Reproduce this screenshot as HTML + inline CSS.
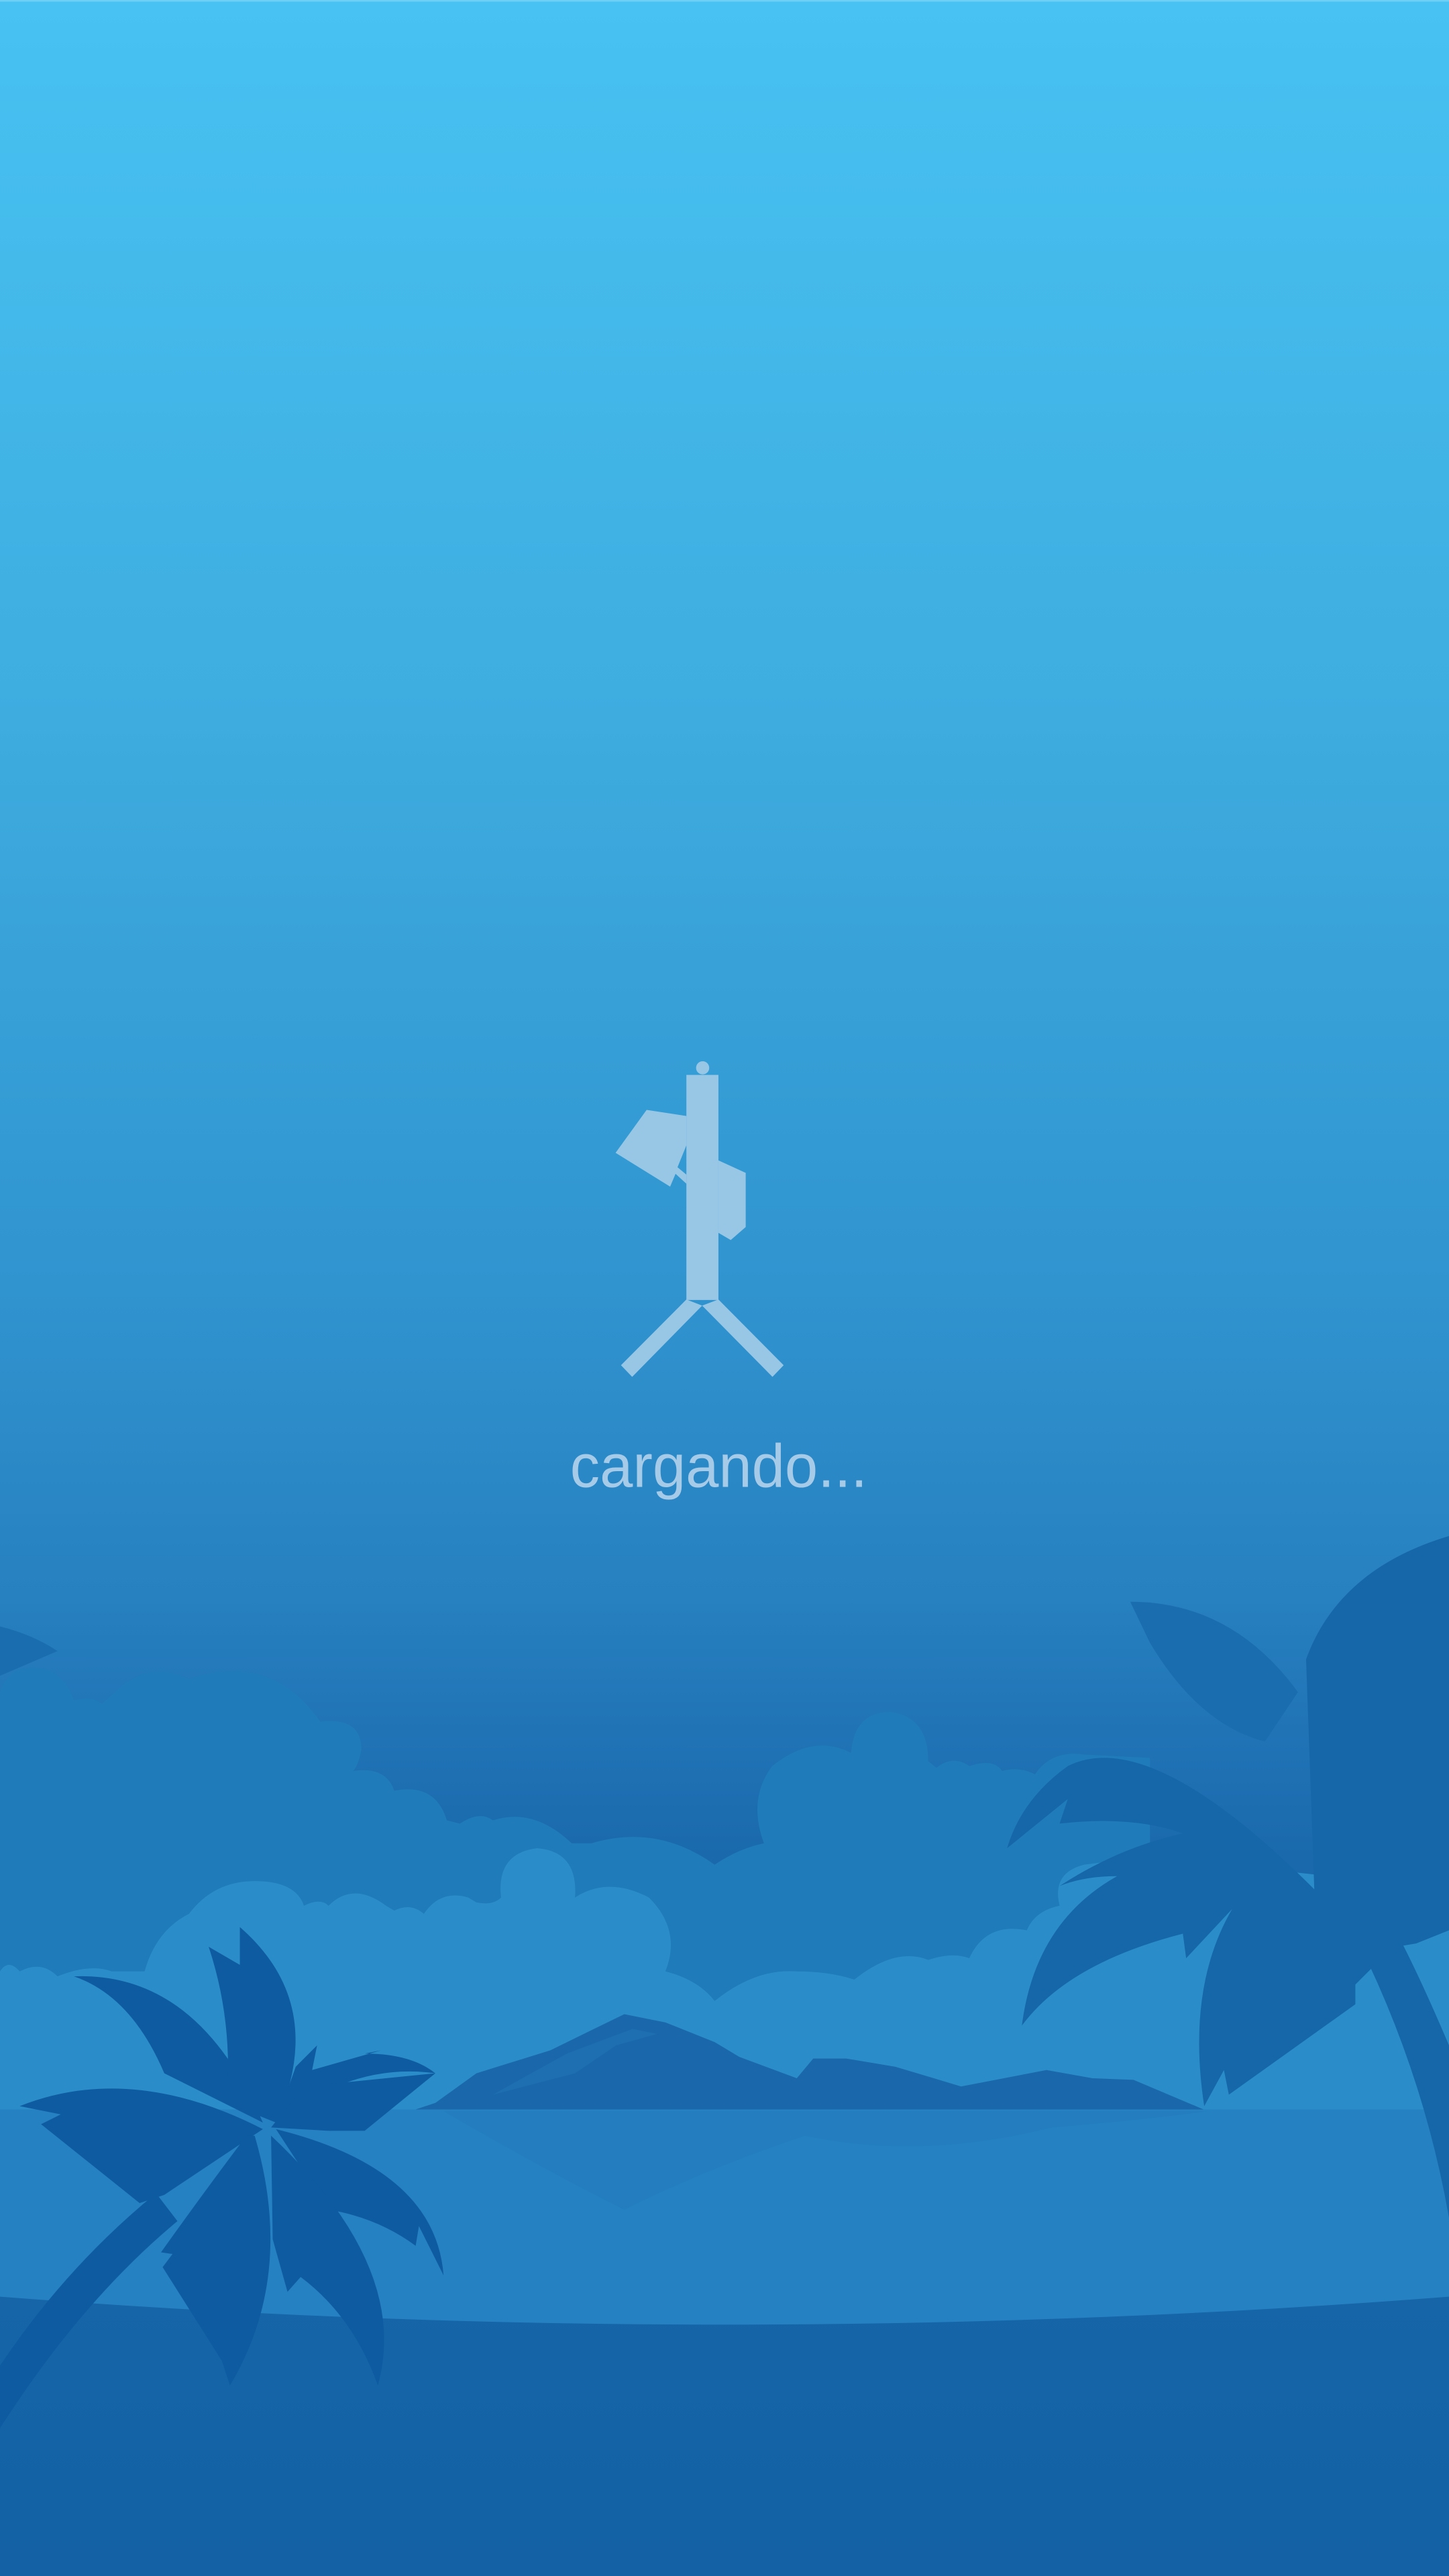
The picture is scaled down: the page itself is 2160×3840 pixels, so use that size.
<!DOCTYPE html>
<html><head><meta charset="utf-8"><style>
html,body{margin:0;padding:0;width:2160px;height:3840px;overflow:hidden;background:#1462a6}
svg{display:block}
</style></head><body>
<svg width="2160" height="3840" viewBox="0 0 882 1568" preserveAspectRatio="none" xmlns="http://www.w3.org/2000/svg">
<defs>
<linearGradient id="sky" x1="0" y1="0" x2="0" y2="1">
<stop offset="0" stop-color="#47c2f2"/>
<stop offset="0.28" stop-color="#3eacdf"/>
<stop offset="0.5" stop-color="#3094cf"/>
<stop offset="0.62" stop-color="#2780c0"/>
<stop offset="0.72" stop-color="#1a69ad"/>
<stop offset="1" stop-color="#1a69ad"/>
</linearGradient>
<linearGradient id="gr" x1="0" y1="0" x2="0" y2="1">
<stop offset="0" stop-color="#1565a8"/>
<stop offset="1" stop-color="#1461a5"/>
</linearGradient>
</defs>
<rect width="882" height="1568" fill="url(#sky)"/>
<rect width="882" height="1" fill="#6fd0f5"/>

<!-- faint background palm -->
<g fill="#1a6dae">
<path d="M688,975 Q750,975 790,1030 L770,1060 Q730,1050 700,1000 Z"/>
<path d="M0,990 Q20,995 35,1005 L0,1020 Z"/>
<path d="M0,1090 L25,1122 L0,1115 Z"/>
</g>

<!-- back clouds -->
<path fill="#1f7bb9" d="M0,1030 Q5,1015 20,1015 Q38,1015 45,1035 Q55,1032 62,1037 L70,1030 Q90,1010 115,1022 Q165,1005 195,1048 Q220,1045 220,1065 Q218,1075 215,1078 Q235,1075 240,1090 Q265,1085 272,1108 L280,1110 Q292,1102 300,1108 Q325,1100 348,1122 L360,1122 Q400,1110 435,1135 Q450,1125 465,1122 Q455,1095 470,1075 Q495,1055 518,1067 Q520,1042 542,1042 Q565,1045 565,1072 L570,1076 Q580,1068 590,1075 Q605,1070 610,1078 Q620,1075 630,1080 Q640,1065 660,1068 L700,1070 L700,1290 L0,1290 Z"/>

<!-- front clouds -->
<path fill="#2a8dc9" d="M0,1200 Q5,1192 12,1200 Q25,1193 35,1203 Q55,1195 68,1200 L88,1200 Q95,1175 115,1165 Q130,1145 155,1145 Q180,1145 185,1160 Q195,1155 200,1160 Q215,1145 235,1160 L240,1163 Q250,1158 258,1165 Q268,1150 285,1155 L290,1158 Q300,1160 305,1155 Q302,1128 327,1125 Q352,1127 350,1155 Q370,1142 395,1155 Q415,1175 405,1200 Q425,1205 435,1218 Q460,1198 485,1200 Q505,1200 520,1205 Q545,1185 565,1193 Q580,1188 590,1192 Q600,1170 625,1175 Q630,1163 645,1160 Q640,1140 660,1135 L700,1130 L882,1150 L882,1290 L0,1290 Z"/>

<!-- mountains -->
<path fill="#1a68ab" d="M250,1285 L265,1280 L290,1262 L335,1248 L380,1226 L405,1231 L435,1243 L450,1252 L485,1265 L495,1253 L515,1253 L545,1258 L585,1270 L637,1260 L665,1265 L690,1266 L735,1285 Z"/>
<path fill="#1f74b5" d="M300,1275 L345,1250 L385,1235 L400,1238 L375,1245 L350,1262 Z" opacity="0.6"/>

<!-- sea -->
<rect x="0" y="1284" width="882" height="140" fill="#2581c1"/>
<path fill="#2279bb" opacity="0.5" d="M270,1285 Q330,1320 380,1345 Q430,1320 490,1300 Q560,1315 640,1295 Q700,1290 735,1285 Z"/>

<!-- ground -->
<path fill="url(#gr)" d="M0,1398 Q441,1432 882,1398 L882,1568 L0,1568 Z"/>

<!-- right palm -->
<g fill="#1667aa">
<path d="M800,1150 Q700,1050 650,1075 Q622,1095 613,1125 L650,1095 L645,1110 Q690,1105 720,1116 Q680,1125 645,1148 Q660,1142 680,1142 Q630,1170 622,1233 Q650,1195 720,1177 L722,1192 L750,1162 Q722,1210 733,1282 L745,1260 L748,1275 L825,1220 L825,1208 L835,1198 L850,1185 L862,1183 L882,1175 L882,935 Q815,955 795,1010 Z"/>
<path d="M833,1195 Q868,1270 882,1350 L882,1245 Q865,1205 852,1180 Z"/>
</g>

<!-- left palm -->
<g fill="#0f5ba1">
<path d="M95,1335 Q40,1380 0,1440 L0,1478 Q50,1400 108,1352 Z"/>
<path d="M160,1292 Q120,1200 45,1203 Q80,1215 100,1262 Z"/>
<path d="M168,1292 Q200,1220 146,1173 L146,1196 L127,1185 Q142,1230 138,1280 Z"/>
<path d="M168,1292 Q215,1255 265,1262 Q250,1250 222,1250 L232,1248 L190,1260 L193,1245 L180,1258 Z"/>
<path d="M165,1295 L200,1297 L222,1297 L265,1262 L185,1270 Z"/>
<path d="M160,1296 Q80,1255 12,1282 L37,1287 L25,1293 L85,1341 L100,1336 Z"/>
<path d="M168,1296 Q265,1320 270,1385 L255,1355 L253,1367 Q230,1350 200,1345 Z"/>
<path d="M165,1300 Q250,1380 230,1452 Q215,1410 183,1386 L175,1395 L166,1363 Z"/>
<path d="M155,1300 Q180,1385 140,1452 L135,1437 L99,1380 L105,1372 L98,1371 Q120,1340 150,1300 Z"/>
</g>

<!-- icon -->
<g fill="#98c7e6">
<circle cx="427.7" cy="650" r="4"/>
<rect x="417.8" y="654.3" width="19.5" height="137"/>
<path d="M393.6,675.6 L417.8,679.3 L417.8,697.2 L412.4,710.5 L417.8,715 L417.8,720.5 L411.2,714.5 L407.9,722.3 L374.7,701.7 Z"/>
<path d="M437.3,706.3 L453.9,713.9 L453.9,746.9 L444.8,754.8 L437.3,750.4 Z"/>
<path d="M417.8,791 L427.4,794.7 L384.8,838.1 L378,831 Z"/>
<path d="M437.3,791 L477,831 L470.2,838.1 L427.4,794.7 Z"/>
</g>
<text x="437.5" y="905" text-anchor="middle" font-family="Liberation Sans, sans-serif" font-size="37" fill="#a5cbe8" textLength="181" lengthAdjust="spacingAndGlyphs">cargando...</text>
</svg>
</body></html>
